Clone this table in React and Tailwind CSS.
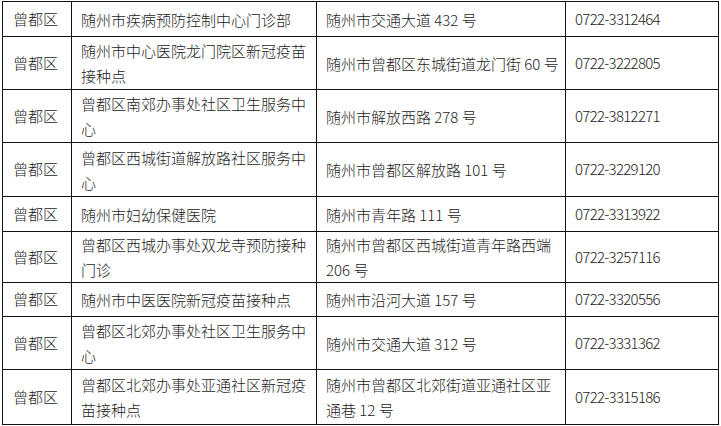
const rows = [
  { h: "h-[35px]", name: ["随州市疾病预防控制中心门诊部"], addr: ["随州市交通大道 432 号"], tel: "0722-3312464" },
  { h: "h-[53px]", name: ["随州市中心医院龙门院区新冠疫苗", "接种点"], addr: ["随州市曾都区东城街道龙门街 60 号"], tel: "0722-3222805" },
  { h: "h-[53px]", name: ["曾都区南郊办事处社区卫生服务中", "心"], addr: ["随州市解放西路 278 号"], tel: "0722-3812271" },
  { h: "h-[54px]", name: ["曾都区西城街道解放路社区服务中", "心"], addr: ["随州市曾都区解放路 101 号"], tel: "0722-3229120" },
  { h: "h-[35px]", name: ["随州市妇幼保健医院"], addr: ["随州市青年路 111 号"], tel: "0722-3313922" },
  { h: "h-[51px]", name: ["曾都区西城办事处双龙寺预防接种", "门诊"], addr: ["随州市曾都区西城街道青年路西端", "206 号"], tel: "0722-3257116" },
  { h: "h-[34px]", name: ["随州市中医医院新冠疫苗接种点"], addr: ["随州市沿河大道 157 号"], tel: "0722-3320556" },
  { h: "h-[53px]", name: ["曾都区北郊办事处社区卫生服务中", "心"], addr: ["随州市交通大道 312 号"], tel: "0722-3331362" },
  { h: "h-[55px]", name: ["曾都区北郊办事处亚通社区新冠疫", "苗接种点"], addr: ["随州市曾都区北郊街道亚通社区亚", "通巷 12 号"], tel: "0722-3315186" },
];

const Lines = ({ lines }) => (
  <div className="leading-[25px] whitespace-nowrap">
    {lines.map((l, i) => (
      <div key={i}>{l}</div>
    ))}
  </div>
);

const App = () => {
  return (
    <div className="bg-white w-[721px] h-[426px] overflow-hidden pl-[2px] pt-[1px] text-[15px] font-light text-[#1c1c1c] font-['Noto_Sans_CJK_SC',sans-serif]">
      <table className="table-fixed border-collapse w-[716px]">
        <colgroup>
          <col className="w-[69px]" />
          <col className="w-[245px]" />
          <col className="w-[249px]" />
          <col className="w-[153px]" />
        </colgroup>
        <tbody>
          {rows.map((r, i) => (
            <tr key={i} className={r.h}>
              <td className="border border-[#111] pl-[10px] align-middle whitespace-nowrap">曾都区</td>
              <td className="border border-[#111] pl-[9px] align-middle">
                <Lines lines={r.name} />
              </td>
              <td className="border border-[#111] pl-[9px] align-middle">
                <Lines lines={r.addr} />
              </td>
              <td className="border border-[#111] pl-[9px] align-middle whitespace-nowrap tracking-[-0.7px]">{r.tel}</td>
            </tr>
          ))}
        </tbody>
      </table>
    </div>
  );
};

export default App;
